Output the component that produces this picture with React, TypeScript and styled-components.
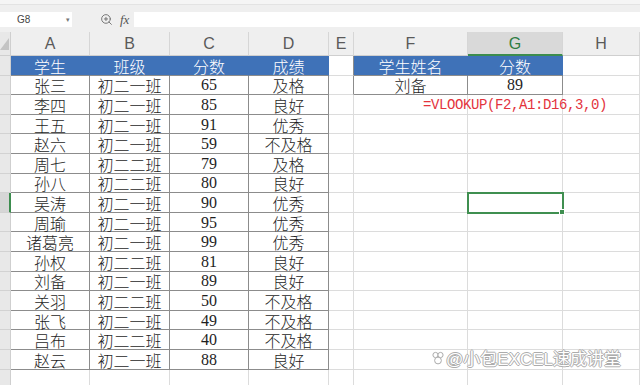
import React from 'react';
import styled, { createGlobalStyle } from 'styled-components';
import { ZoomIn } from 'lucide-react';

const GlobalStyle = createGlobalStyle`
  html, body {
    margin: 0;
    padding: 0;
    background: #fff;
    overflow: hidden;
  }
  body {
    width: 640px;
    height: 385px;
    position: relative;
  }
`;

type Tone = 'plain' | 'head' | 'table';

interface CellSpec {
  text?: string;
  tone: Tone;
  darkRight?: boolean;
  formula?: boolean;
  selected?: boolean;
}

const LETTERS = ['A', 'B', 'C', 'D', 'E', 'F', 'G', 'H'];
const ACTIVE_COL = 'G';
const ACTIVE_ROW = 8;
const ROW_COUNT = 17;

const header = ['学生', '班级', '分数', '成绩'];
const students: [string, string, number, string][] = [
  ['张三', '初二一班', 65, '及格'],
  ['李四', '初二一班', 85, '良好'],
  ['王五', '初二一班', 91, '优秀'],
  ['赵六', '初二一班', 59, '不及格'],
  ['周七', '初二二班', 79, '及格'],
  ['孙八', '初二二班', 80, '良好'],
  ['吴涛', '初二一班', 90, '优秀'],
  ['周瑜', '初二一班', 95, '优秀'],
  ['诸葛亮', '初二一班', 99, '优秀'],
  ['孙权', '初二二班', 81, '良好'],
  ['刘备', '初二一班', 89, '良好'],
  ['关羽', '初二二班', 50, '不及格'],
  ['张飞', '初二一班', 49, '不及格'],
  ['吕布', '初二二班', 40, '不及格'],
  ['赵云', '初二一班', 88, '良好'],
];

function buildRow(r: number): CellSpec[] {
  const cells: CellSpec[] = [];
  // A..D : student table
  for (let c = 0; c < 4; c++) {
    if (r === 1) cells.push({ text: header[c], tone: 'head' });
    else if (r <= 16) cells.push({ text: String(students[r - 2][c]), tone: 'table' });
    else cells.push({ tone: 'plain' });
  }
  // E : spacer column, borders the lookup box on its right
  cells.push({ tone: 'plain', darkRight: r <= 2 });
  // F, G : lookup box
  if (r === 1) {
    cells.push({ text: '学生姓名', tone: 'head' });
    cells.push({ text: '分数', tone: 'head' });
  } else if (r === 2) {
    cells.push({ text: '刘备', tone: 'table' });
    cells.push({ text: '89', tone: 'table' });
  } else if (r === 3) {
    cells.push({ tone: 'plain' });
    cells.push({ text: '=VLOOKUP(F2,A1:D16,3,0)', tone: 'plain', formula: true });
  } else {
    cells.push({ tone: 'plain' });
    cells.push({ tone: 'plain', selected: r === ACTIVE_ROW });
  }
  // H
  cells.push({ tone: 'plain' });
  return cells;
}

function App() {
  const rows = Array.from({ length: ROW_COUNT }, (_, i) => i + 1);
  return (
    <>
      <GlobalStyle />
      <TopStrip />
      <FormulaBar>
        <NameBox>
          <span>G8</span>
          <Caret>▾</Caret>
        </NameBox>
        <BarTools>
          <ZoomIn size={13} strokeWidth={1.6} color="#666" />
          <Fx>fx</Fx>
        </BarTools>
        <FormulaInput />
      </FormulaBar>
      <Sheet>
        <Corner>
          <CornerMark />
        </Corner>
        {LETTERS.map((l) => (
          <ColHead key={l} $active={l === ACTIVE_COL}>
            {l}
          </ColHead>
        ))}
        {rows.map((r) => (
          <React.Fragment key={r}>
            {/* row numbers sit off the left edge of the scrolled view */}
            <RowHead $active={r === ACTIVE_ROW} />
            {buildRow(r).map((cell, i) =>
              cell.formula ? (
                <Cell key={i} $tone={cell.tone}>
                  <Formula>{cell.text}</Formula>
                </Cell>
              ) : (
                <Cell
                  key={i}
                  $tone={cell.tone}
                  $darkRight={cell.darkRight}
                  $selected={cell.selected}
                >
                  {cell.text}
                </Cell>
              )
            )}
          </React.Fragment>
        ))}
      </Sheet>
      <Watermark>
        <svg width="14" height="14" viewBox="0 0 14 14">
          <g fill="#fff" stroke="#a8a8a8" strokeWidth="1">
            <circle cx="4.5" cy="4" r="2.6" />
            <circle cx="9.5" cy="4" r="2.6" />
            <circle cx="7" cy="9.5" r="3.4" />
          </g>
        </svg>
        <span>@小包EXCEL速成讲堂</span>
      </Watermark>
    </>
  );
}

export default App;

const TopStrip = styled.div`
  height: 4px;
  background: #f5f5f5;
  border-bottom: 1px solid #e3e3e3;
`;

const FormulaBar = styled.div`
  height: 27px;
  box-sizing: border-box;
  padding-top: 7px;
  display: flex;
  align-items: flex-start;
  background: #efefef;
`;

const NameBox = styled.div`
  width: 72px;
  height: 15px;
  box-sizing: border-box;
  background: #fff;
  display: flex;
  align-items: center;
  justify-content: space-between;
  padding: 0 2px 0 17px;
  font-family: "Liberation Sans", Arial, sans-serif;
  font-size: 10px;
  color: #444;
`;

const Caret = styled.span`
  font-size: 7px;
  color: #777;
`;

const BarTools = styled.div`
  width: 62px;
  height: 15px;
  display: flex;
  align-items: center;
  gap: 7px;
  padding-left: 28px;
  box-sizing: border-box;
`;

const Fx = styled.span`
  font-family: "Liberation Serif", serif;
  font-style: italic;
  font-size: 13px;
  color: #555;
`;

const FormulaInput = styled.div`
  flex: 1;
  height: 15px;
  background: #fff;
`;

const Sheet = styled.div`
  display: grid;
  grid-template-columns: 11px 79px 80px 79px 80px 25px 114px 95px 1fr;
  grid-template-rows: 24px;
  grid-auto-rows: 19.6px;
`;

const Corner = styled.div`
  background: #e8e8e8;
  border-right: 1px solid #cfcfcf;
  border-bottom: 1px solid #cfcfcf;
  box-sizing: border-box;
  display: flex;
  align-items: flex-end;
  padding: 0 0 5px 0;
`;

const CornerMark = styled.div`
  width: 0;
  height: 0;
  border-left: 9px solid transparent;
  border-bottom: 12px solid #c4c4c4;
`;

const ColHead = styled.div<{ $active?: boolean }>`
  box-sizing: border-box;
  display: flex;
  align-items: center;
  justify-content: center;
  padding-top: 1px;
  background: ${(p) => (p.$active ? '#d9d9d9' : '#efefef')};
  border-right: 1px solid #d6d6d6;
  border-bottom: ${(p) => (p.$active ? '2px solid #3c8c4e' : '1px solid #cfcfcf')};
  font-family: "Liberation Sans", Arial, sans-serif;
  font-size: 16px;
  color: ${(p) => (p.$active ? '#2f7d43' : '#5a5a5a')};
`;

const RowHead = styled.div<{ $active?: boolean }>`
  box-sizing: border-box;
  background: ${(p) => (p.$active ? '#d6d6d6' : '#e8e8e8')};
  border-bottom: 1px solid #d2d2d2;
  border-right: ${(p) => (p.$active ? '2px solid #3c8c4e' : '1px solid #cfcfcf')};
`;

const Cell = styled.div<{ $tone: Tone; $darkRight?: boolean; $selected?: boolean }>`
  box-sizing: border-box;
  position: relative;
  display: flex;
  align-items: center;
  justify-content: center;
  padding-top: 1px;
  white-space: nowrap;
  font-family: "Liberation Serif", "Noto Sans CJK SC", serif;
  font-size: 16px;
  font-weight: 300;
  background: ${(p) => (p.$tone === 'head' ? '#3f72b8' : 'transparent')};
  color: ${(p) => (p.$tone === 'head' ? '#fff' : '#1e1e1e')};
  border-right: 1px solid
    ${(p) =>
      p.$tone === 'head'
        ? '#3f72b8'
        : p.$tone === 'table' || p.$darkRight
        ? '#8c8c8c'
        : '#dcdcdc'};
  border-bottom: 1px solid ${(p) => (p.$tone === 'plain' ? '#dcdcdc' : '#8c8c8c')};
  ${(p) =>
    p.$selected &&
    `
    z-index: 2;
    outline: 2px solid #3f8f50;
    outline-offset: -1px;
    &::after {
      content: '';
      position: absolute;
      right: -3px;
      bottom: -3px;
      width: 4px;
      height: 4px;
      background: #3f8f50;
      border: 1px solid #fff;
    }
  `}
`;

const Formula = styled.span`
  position: relative;
  z-index: 1;
  font-family: "Liberation Mono", "Courier New", monospace;
  font-size: 14px;
  letter-spacing: -0.4px;
  color: #e3333d;
`;

const Watermark = styled.div`
  position: absolute;
  left: 431px;
  top: 345px;
  display: flex;
  align-items: center;
  gap: 1px;
  font-family: "Liberation Sans", "Noto Sans CJK SC", sans-serif;
  font-size: 17px;
  color: #fff;
  text-shadow: 1px 0 #a8a8a8, -1px 0 #a8a8a8, 0 1px #a8a8a8, 0 -1px #a8a8a8;
  opacity: 0.95;
`;
